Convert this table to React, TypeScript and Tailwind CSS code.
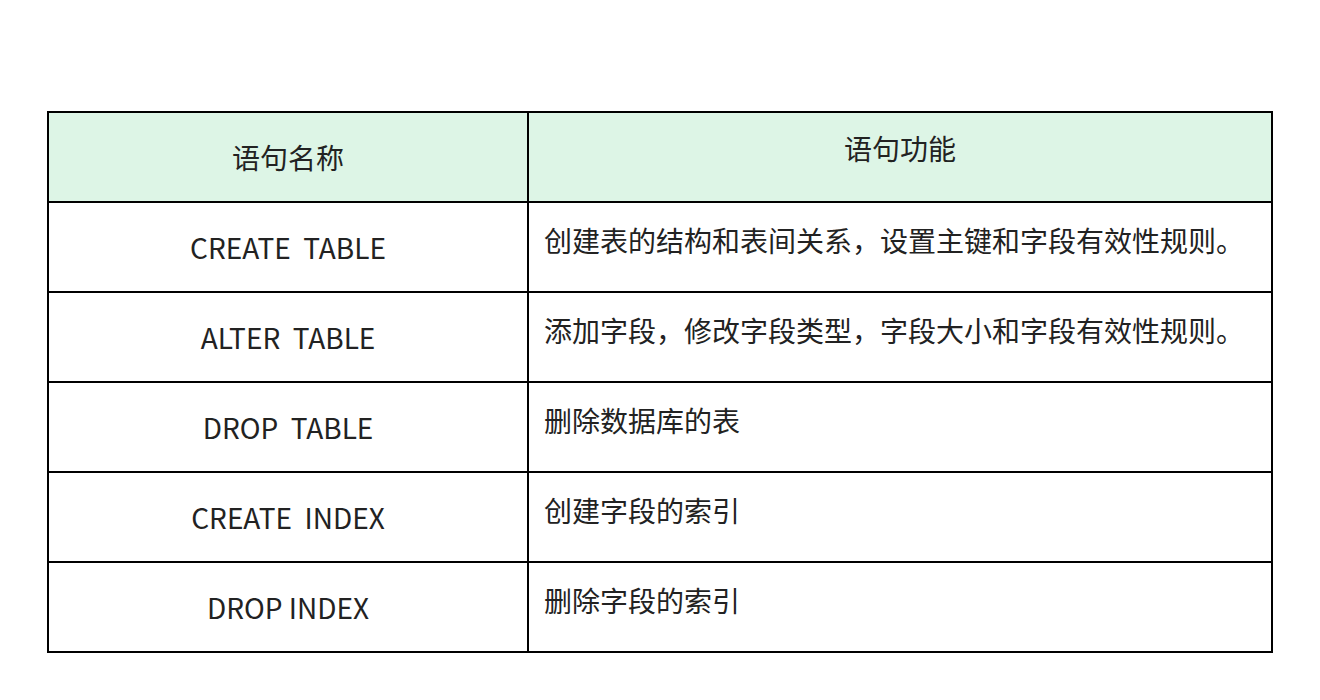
import React from "react";

const rows: [string, string][] = [
  ["CREATE  TABLE", "创建表的结构和表间关系，设置主键和字段有效性规则。"],
  ["ALTER  TABLE", "添加字段，修改字段类型，字段大小和字段有效性规则。"],
  ["DROP  TABLE", "删除数据库的表"],
  ["CREATE  INDEX", "创建字段的索引"],
  ["DROP INDEX", "删除字段的索引"],
];

export default function App() {
  return (
    <div
      className="w-[1320px] h-[700px] bg-white pt-[111px] pl-[47px] text-[#222]"
      style={{ fontFamily: '"Noto Sans CJK SC", "Noto Sans", sans-serif' }}
    >
      <div className="w-[1226px] border-2 border-black text-[28px] leading-[42px]">
        <div className="flex h-[90px] border-b-2 border-black bg-[#ddf5e6]">
          <div className="w-[480px] shrink-0 border-r-2 border-black flex items-center justify-center">
            语句名称
          </div>
          <div className="flex-1 flex justify-center pt-[14px]">语句功能</div>
        </div>
        {rows.map(([a, b], i) => (
          <div
            key={i}
            className={
              i < rows.length - 1
                ? "flex h-[90px] border-b-2 border-black"
                : "flex h-[88px]"
            }
          >
            <div className="w-[480px] shrink-0 border-r-2 border-black flex items-center justify-center whitespace-pre">
              {a}
            </div>
            <div className="flex-1 pl-[15px] pt-[16px]">{b}</div>
          </div>
        ))}
      </div>
    </div>
  );
}
